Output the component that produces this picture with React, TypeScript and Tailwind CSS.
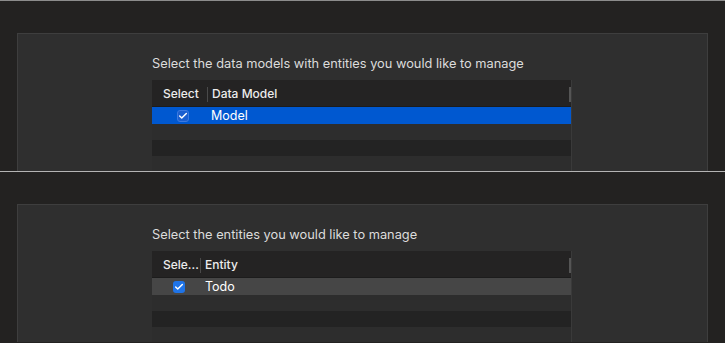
import { Check } from 'lucide-react';

type Pane = {
  title: string;
  firstCol: string;
  firstWidth: string;
  secondCol: string;
  item: string;
  active: boolean;
};

function Checkbox({ active }: { active: boolean }) {
  return (
    <div
      className={`w-[12px] h-[12px] rounded-[3px] flex items-center justify-center ${
        active ? 'bg-[#1b5fd0] border border-[#3d7ae0]' : 'bg-[#1f74e8]'
      }`}
    >
      <Check className="w-[10px] h-[10px] text-white" strokeWidth={3.5} />
    </div>
  );
}

function Window({ pane, topLine }: { pane: Pane; topLine: string }) {
  return (
    <div className={`h-[171px] flex flex-col border-t ${topLine} overflow-hidden`}>
      <div className="mt-[32px] ml-[17px] w-[691px] flex-1 bg-[#2f2f2f] border border-[#3e3e3e] border-b-0 pt-[22px] pl-[134px]">
        <p className="text-[12.8px] leading-[16px] text-[#dcdcdc]">{pane.title}</p>

        {/* Table */}
        <div className="mt-[8px] w-[420px] border-r border-[#3a3a3a] flex flex-col">
          <div className="h-[27px] pt-[2px] bg-[#242323] border-b border-[#1c1c1c] flex items-center text-[12px] font-medium text-[#ececec]">
            <div className={`${pane.firstWidth} pl-[11px] flex items-center justify-between`}>
              <span>{pane.firstCol}</span>
              <span className="w-px h-[15px] bg-[#4a4a4a]" />
            </div>
            <span className="flex-1 pl-[4px]">{pane.secondCol}</span>
            <span className="w-[2px] h-[15px] bg-[#555]" />
          </div>
          <div
            className={`h-[17px] pt-[1px] flex items-center text-[12.5px] text-white ${
              pane.active ? 'bg-[#0058d0]' : 'bg-[#464646]'
            }`}
          >
            <div className={`${pane.firstWidth} flex justify-center pl-[5px]`}>
              <Checkbox active={pane.active} />
            </div>
            <span className={pane.active ? 'pl-[3px]' : 'pl-[4px]'}>{pane.item}</span>
          </div>
          <div className="h-[16px] bg-[#2d2d2d]" />
          <div className="h-[16px] bg-[#232323]" />
          <div className="h-[20px] bg-[#2d2d2d]" />
        </div>
      </div>
    </div>
  );
}

export default function App() {
  const panes: Pane[] = [
    {
      title: 'Select the data models with entities you would like to manage',
      firstCol: 'Select',
      firstWidth: 'w-[56px]',
      secondCol: 'Data Model',
      item: 'Model',
      active: true,
    },
    {
      title: 'Select the entities you would like to manage',
      firstCol: 'Sele...',
      firstWidth: 'w-[49px]',
      secondCol: 'Entity',
      item: 'Todo',
      active: false,
    },
  ];

  return (
    <div
      className="w-[725px] h-[343px] bg-[#232221] overflow-hidden"
      style={{ fontFamily: 'Inter, "Liberation Sans", sans-serif' }}
    >
      <Window pane={panes[0]} topLine="border-[#8c8c8c]" />
      <Window pane={panes[1]} topLine="border-[#b4b4b4]" />
    </div>
  );
}
